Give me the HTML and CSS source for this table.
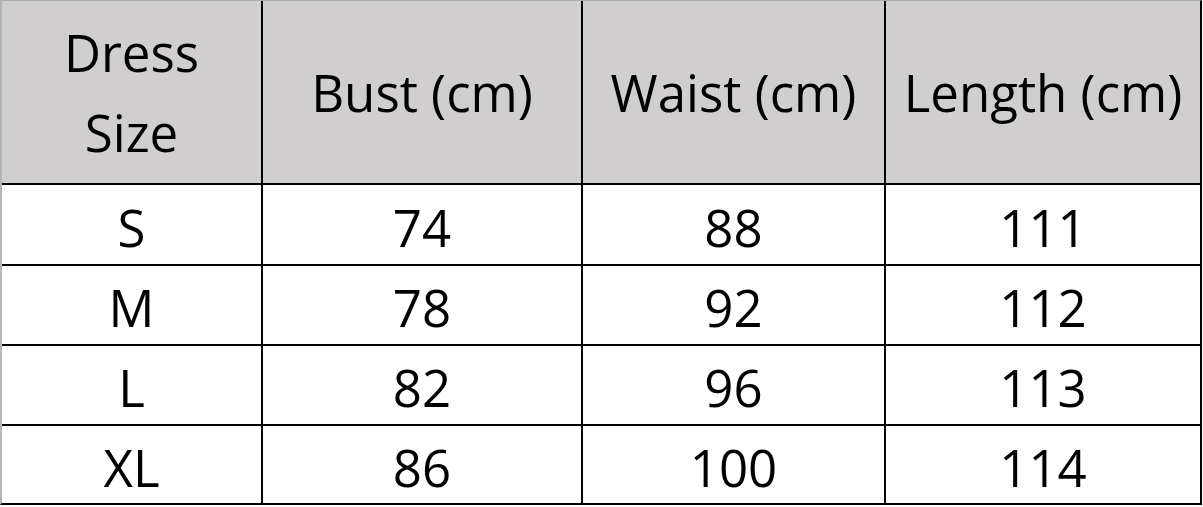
FILE: index.html
```html
<!DOCTYPE html>
<html>
<head>
<meta charset="utf-8">
<link rel="stylesheet" href="styles.css">
</head>
<body>
<div class="size-table">
  <div class="cell head">Dress<br>Size</div>
  <div class="cell head">Bust (cm)</div>
  <div class="cell head">Waist (cm)</div>
  <div class="cell head">Length (cm)</div>

  <div class="cell">S</div>
  <div class="cell">74</div>
  <div class="cell">88</div>
  <div class="cell">111</div>

  <div class="cell">M</div>
  <div class="cell">78</div>
  <div class="cell">92</div>
  <div class="cell">112</div>

  <div class="cell">L</div>
  <div class="cell">82</div>
  <div class="cell">96</div>
  <div class="cell">113</div>

  <div class="cell">XL</div>
  <div class="cell">86</div>
  <div class="cell">100</div>
  <div class="cell">114</div>
</div>
</body>
</html>
```

FILE: styles.css
```css
html, body {
  margin: 0;
  padding: 0;
  background: #ffffff;
}

.size-table {
  display: grid;
  grid-template-columns: 259px 318px 301px 314px;
  grid-template-rows: 182px 79px 78px 78px 77px;
  gap: 2px;
  width: max-content;
  background: #000000;
  border-top: 1px solid #a9a9a9;
  border-left: 2px solid #b4b4b4;
  border-right: 2px solid #000000;
  border-bottom: 2px solid #000000;
  font-family: "Open Sans", "Noto Sans", sans-serif;
  font-size: 51px;
  color: #000000;
}

.cell {
  background: #ffffff;
  display: flex;
  align-items: center;
  justify-content: center;
  text-align: center;
  line-height: 80px;
  padding-top: 4px;
  box-sizing: border-box;
}

.head {
  background: #d0cece;
  padding-top: 0;
}
```
